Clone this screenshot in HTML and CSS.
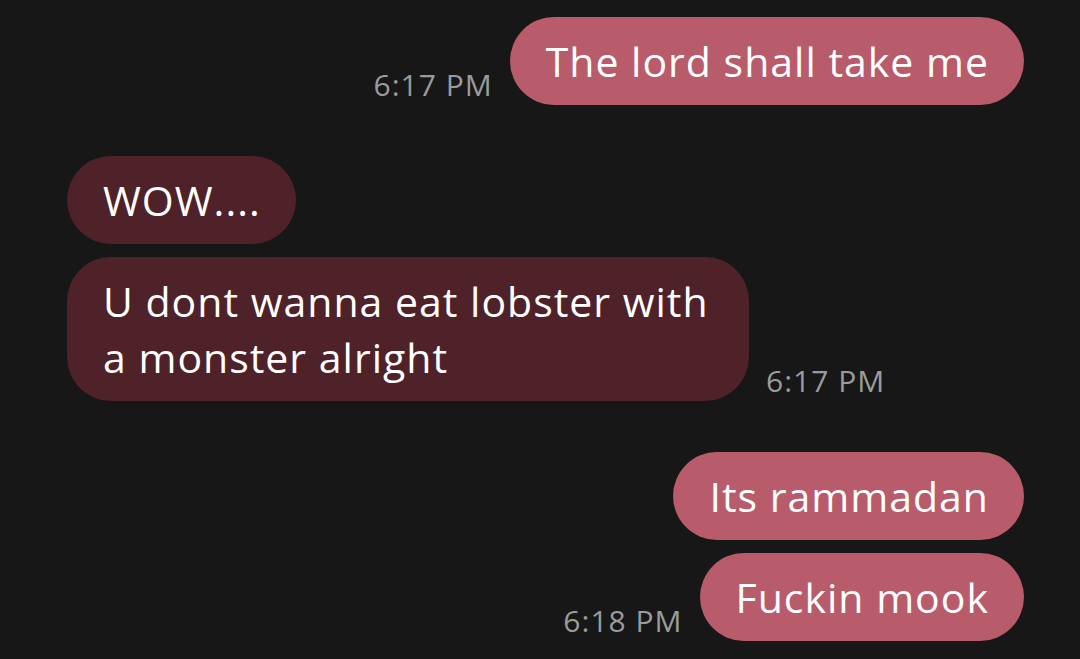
FILE: index.html
```html
<!DOCTYPE html>
<html lang="en">
<head>
<meta charset="utf-8">
<title>Messages</title>
<link rel="stylesheet" href="styles.css">
</head>
<body>
<main class="thread">
  <section class="group group-out">
    <div class="row">
      <span class="time">6:17 PM</span>
      <div class="bubble bubble-out">The lord shall take me</div>
    </div>
  </section>

  <section class="group group-in">
    <div class="row">
      <div class="bubble bubble-in">WOW....</div>
    </div>
    <div class="row">
      <div class="bubble bubble-in">U dont wanna eat lobster with a monster alright</div>
      <span class="time">6:17 PM</span>
    </div>
  </section>

  <section class="group group-out">
    <div class="row">
      <div class="bubble bubble-out">Its rammadan</div>
    </div>
    <div class="row">
      <span class="time">6:18 PM</span>
      <div class="bubble bubble-out">Fuckin mook</div>
    </div>
  </section>
</main>
</body>
</html>
```

FILE: styles.css
```css
html, body {
  margin: 0;
  height: 100%;
  background: #171717;
}

body {
  font-family: "Open Sans", Roboto, sans-serif;
  color: #ffffff;
  overflow: hidden;
}

.thread {
  display: flex;
  flex-direction: column;
  gap: 51px;
  padding: 17px 56px 0 67px;
}

.group {
  display: flex;
  flex-direction: column;
  gap: 13px;
}

.row {
  display: flex;
  align-items: flex-end;
  gap: 17px;
}

.group-out .row {
  justify-content: flex-end;
}

.group-in .row {
  justify-content: flex-start;
}

.bubble {
  font-size: 41px;
  letter-spacing: 1px;
  line-height: 56px;
  padding: 16px 35px 16px 36px;
  border-radius: 44px;
  max-width: 682px;
  box-sizing: border-box;
}

.bubble-out {
  background: #b85b6b;
}

.bubble-in {
  background: #4f2129;
}

.time {
  font-size: 30px;
  letter-spacing: 1px;
  line-height: 31px;
  color: #9b9b9b;
  margin-bottom: 5px;
  white-space: nowrap;
}
```
